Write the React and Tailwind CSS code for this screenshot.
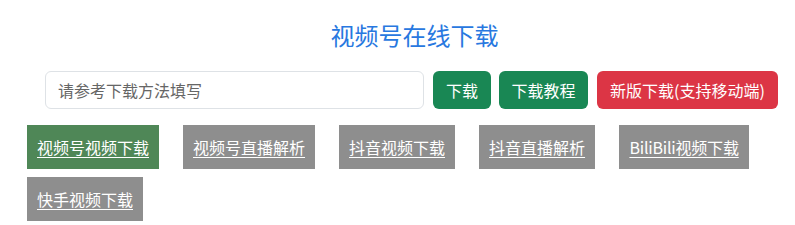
import React from "react";

const tabs = [
  { label: "视频号视频下载", active: true },
  { label: "视频号直播解析" },
  { label: "抖音视频下载" },
  { label: "抖音直播解析" },
  { label: "BiliBili视频下载", narrow: true },
  { label: "快手视频下载" },
];

export default function App() {
  return (
    <div
      className="w-[795px] h-[225px] bg-white overflow-hidden"
      style={{ fontFamily: '"Noto Sans CJK SC", "Noto Sans", sans-serif' }}
    >
      <div className="pt-[20px] pl-[34px] text-center">
        <h1 className="text-[24px] leading-[29px] text-[#2878e0] font-normal">视频号在线下载</h1>
      </div>
      <div className="mt-[22px] pl-[45px] flex items-center">
        <input
          type="text"
          placeholder="请参考下载方法填写"
          className="w-[379px] h-[38px] border border-[#dee2e6] rounded-[6px] px-[12px] text-[16px] text-[#212529] placeholder:text-[#666666] outline-none"
        />
        <button className="ml-[9px] h-[38px] w-[58px] rounded-[6px] bg-[#198754] text-white text-[16px] leading-none">
          下载
        </button>
        <button className="ml-[8px] h-[38px] w-[89px] rounded-[6px] bg-[#198754] text-white text-[16px] leading-none">
          下载教程
        </button>
        <button className="ml-[9px] h-[38px] w-[181px] rounded-[6px] bg-[#dc3545] text-white text-[16px] leading-none whitespace-nowrap">
          新版下载(支持移动端)
        </button>
      </div>
      <div className="mt-[16px] pl-[27px] pr-[20px] flex flex-wrap gap-x-[24px] gap-y-[8px]">
        {tabs.map((t) => (
          <a
            key={t.label}
            href="#"
            className={`h-[44px] flex items-center justify-center text-[16px] text-white underline underline-offset-[3px] whitespace-nowrap ${
              t.narrow ? "w-[130px] tracking-[-0.2px]" : "px-[10px]"
            } ${t.active ? "bg-[#4f8757]" : "bg-[#8e8e8e]"}`}
          >
            {t.label}
          </a>
        ))}
      </div>
    </div>
  );
}
